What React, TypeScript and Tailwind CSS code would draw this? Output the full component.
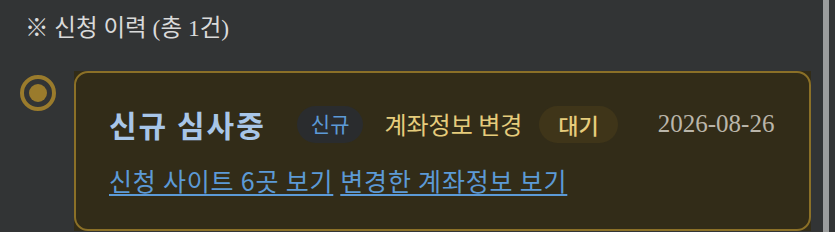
export default function App() {
  return (
    <div className="w-[835px] h-[232px] bg-[#323435] relative overflow-hidden font-['Liberation_Serif','Noto_Sans_CJK_KR',serif]">
      <div className="pl-[25px] pt-[14px] text-[23.5px] leading-[28px] text-[#dadada]">
        ※ 신청 이력 (총 1건)
      </div>
      <div className="flex mt-[29px] pl-[20px] pr-[24px]">
        <div className="w-[36px] h-[36px] mt-[4px] rounded-full border-[4px] border-[#9a7b2c] flex items-center justify-center">
          <div className="w-[18px] h-[18px] rounded-full bg-[#9a7b2c]" />
        </div>
        <div className="ml-[18px] w-[737px] h-[160px] bg-[#322c18]">
          <div className="h-full rounded-[14px] border-2 border-[#8b7027] pl-[33px] pt-[31px]">
            <div className="flex items-center h-[40px] font-['Noto_Sans_CJK_KR',sans-serif]">
              <span className="font-bold text-[30px] text-[#a8c6e8] tracking-[2px]">
                신규 심사중
              </span>
              <span className="ml-[31px] rounded-full bg-[#2a2c2e] px-[14px] h-[37px] flex items-center text-[21px] text-[#5c9ad6]">
                신규
              </span>
              <span className="ml-[21px] text-[24px] text-[#e6cc7c]">
                계좌정보 변경
              </span>
              <span className="ml-[17px] rounded-full bg-[#3f3519] px-[19px] h-[37px] flex items-center text-[22px] font-medium text-[#e6cc7c]">
                대기
              </span>
              <span className="ml-[40px] font-['Liberation_Serif',serif] text-[25px] text-[#bab6aa]">2026-08-26</span>
            </div>
            <div className="mt-[21px] flex gap-[7px] font-['Noto_Sans_CJK_KR',sans-serif] text-[25px] leading-[30px] tracking-[0.8px] text-[#5c9ad6]">
              <a className="underline underline-offset-[3px]">신청 사이트 6곳 보기</a>
              <a className="underline underline-offset-[3px]">변경한 계좌정보 보기</a>
            </div>
          </div>
        </div>
      </div>
      <div className="absolute left-[823px] top-0 w-[6px] h-full bg-[#9b9d9d]" />
    </div>
  );
}
